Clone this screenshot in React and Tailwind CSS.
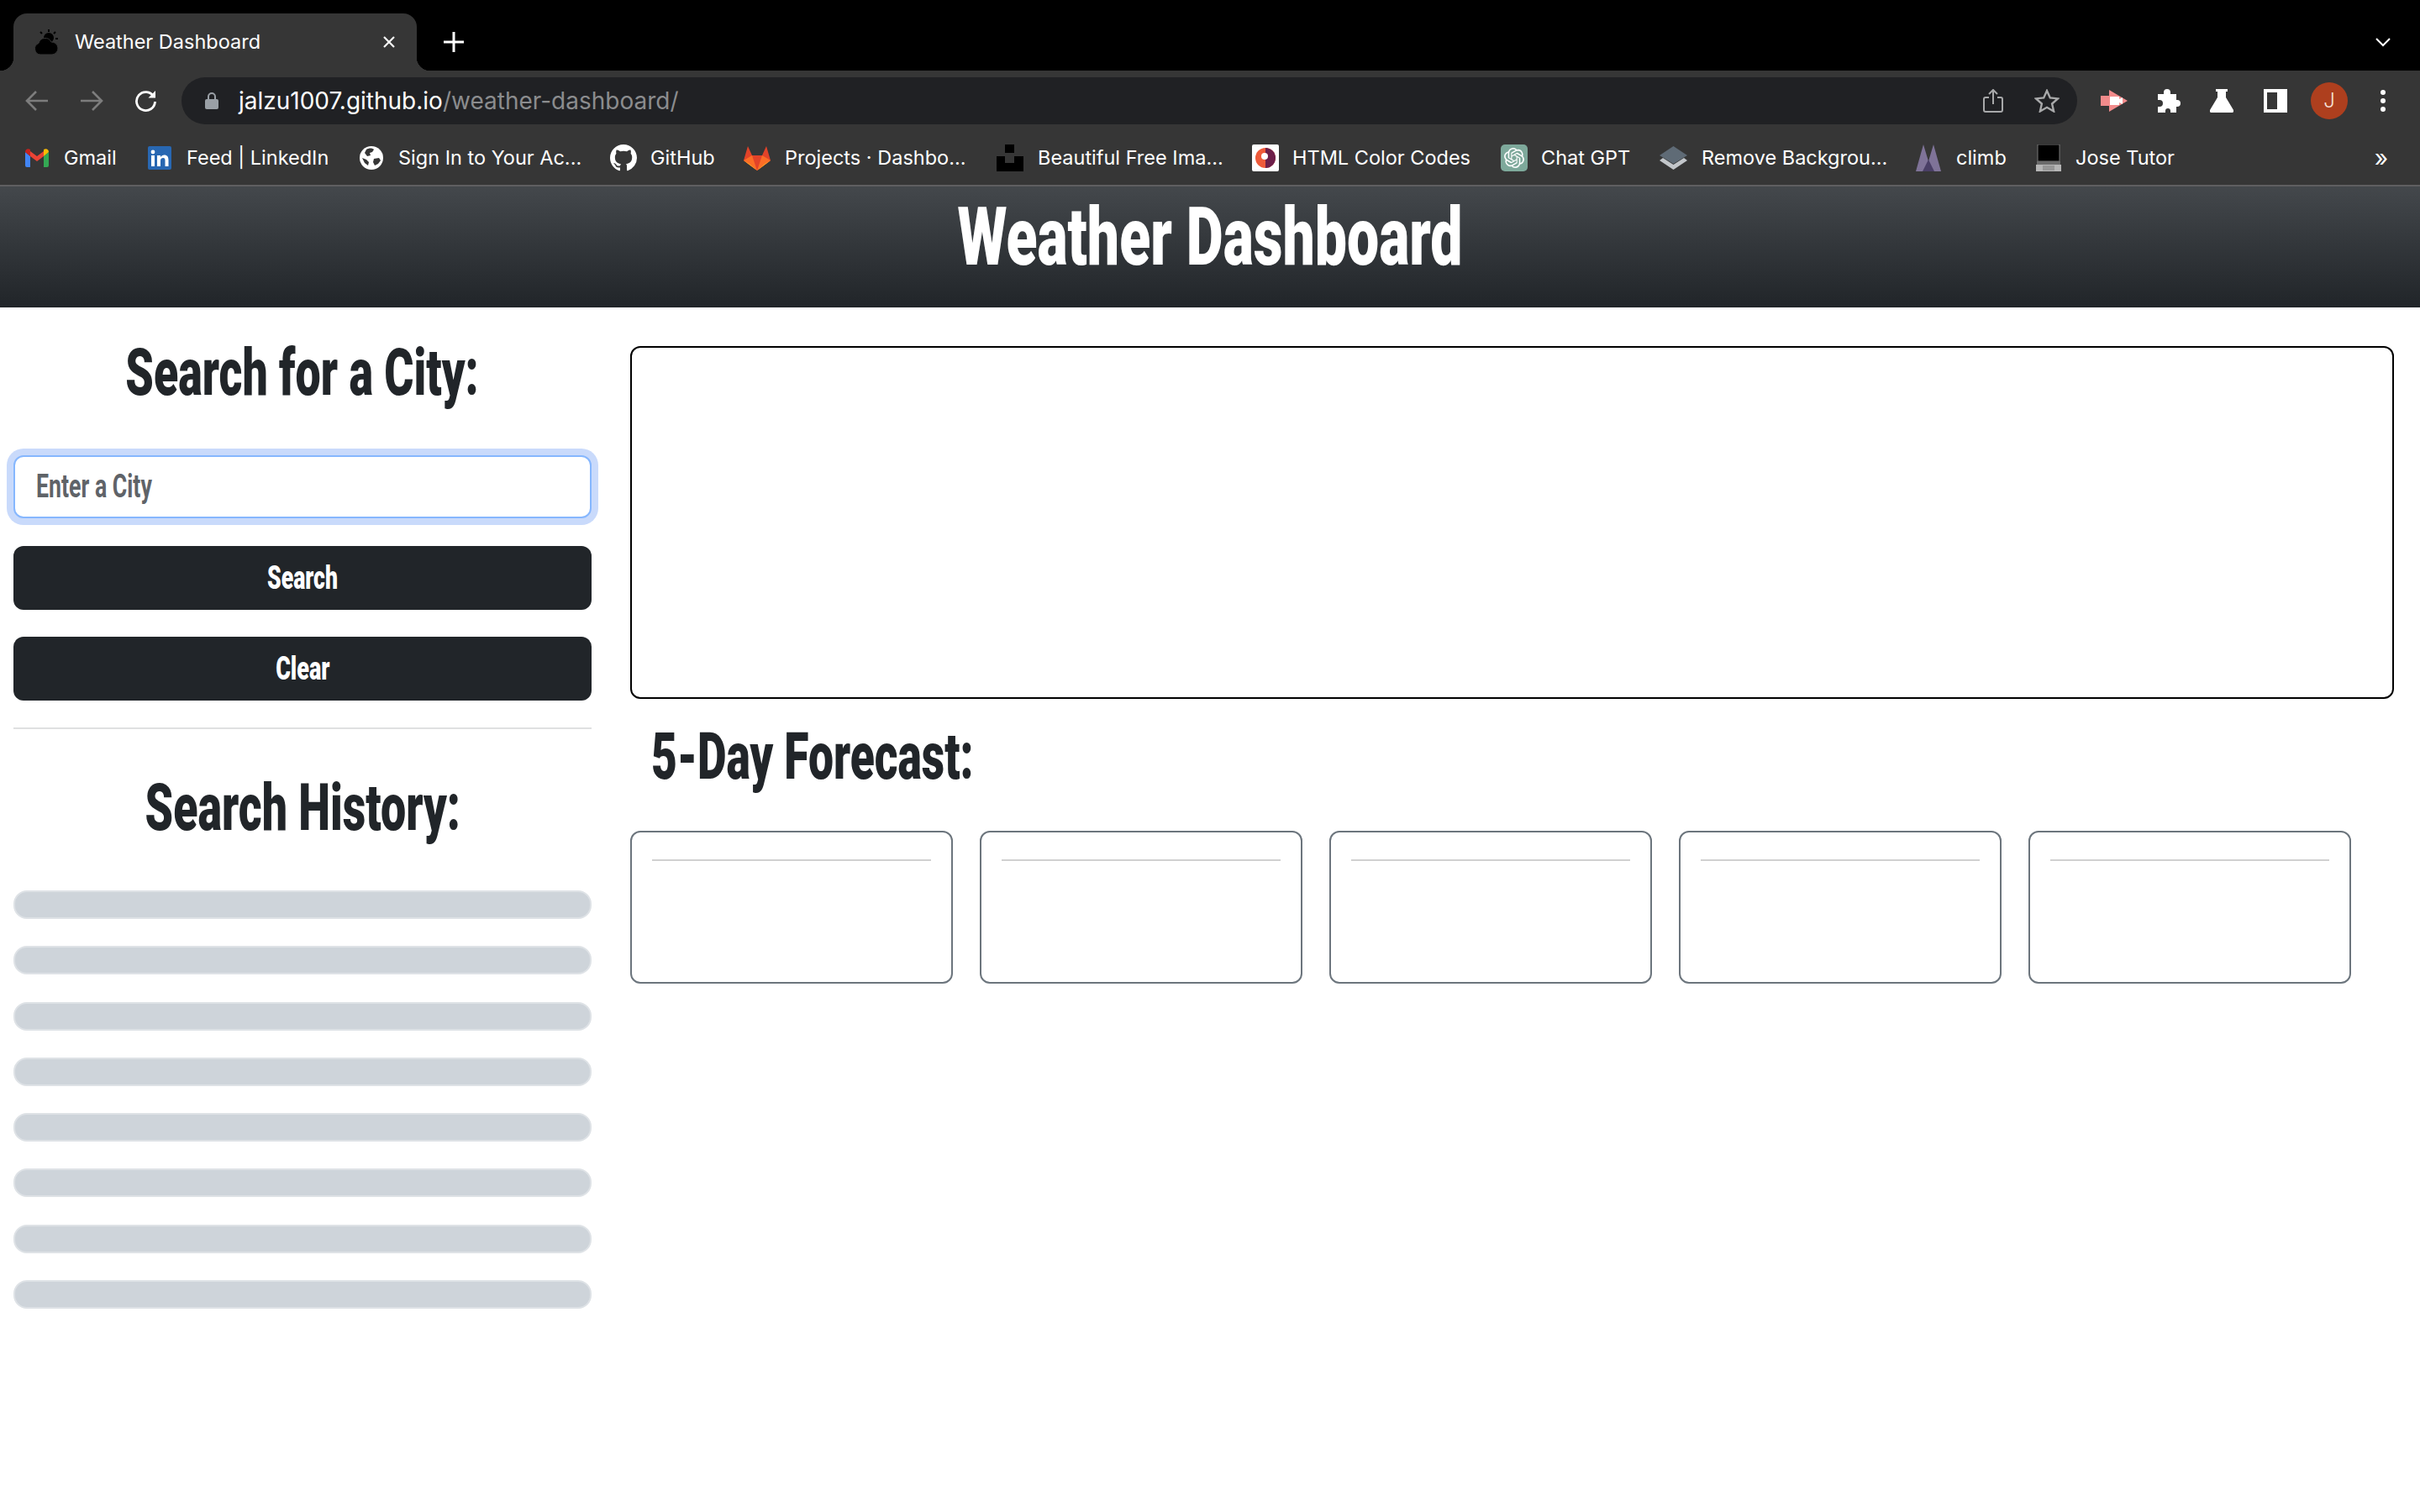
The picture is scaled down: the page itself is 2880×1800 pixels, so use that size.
import React from 'react';
import { SiOpenai } from 'react-icons/si';

const chromeFont = "font-['Inter','Liberation_Sans',sans-serif]";
const headFont = "font-['Roboto','Liberation_Sans',sans-serif]";

const Gmail = () => (
  <svg width="28" height="22" viewBox="0 0 28 22">
    <path d="M0 4v16a2 2 0 0 0 2 2h4V9z" fill="#4285f4" />
    <path d="M28 4v16a2 2 0 0 1-2 2h-4V9z" fill="#34a853" />
    <path d="M6 9V3l8 6 8-6v6l-8 6z" fill="#ea4335" />
    <path d="M0 4c0-3 3-5 6-3v8z" fill="#c5221f" />
    <path d="M28 4c0-3-3-5-6-3v8z" fill="#fbbc04" />
  </svg>
);

const Linkedin = () => (
  <svg width="28" height="28" viewBox="0 0 28 28">
    <rect width="28" height="28" rx="2" fill="#2867b2" />
    <rect x="4" y="11" width="4" height="13" fill="#fff" />
    <circle cx="6" cy="7" r="2.4" fill="#fff" />
    <path d="M11 11h4v2c1-1.500 2.500-2.400 4.500-2.400 3.500 0 5 2.200 5 6V24h-4v-7c0-2-.7-3-2.300-3-1.700 0-3.200 1-3.200 3.200V24h-4z" fill="#fff" />
  </svg>
);

const Globe = () => (
  <svg width="28" height="28" viewBox="0 0 28 28">
    <circle cx="14" cy="14" r="14" fill="#fff" />
    <path d="M8 4c3-2 7-2 9 0l-2 3-3 1 1 3-4 1-3-4zM17 15l6-1 2 3-3 4-4 2-2-4zM3 14l5 2 3 3-1 4-4-3z" fill="#363636" />
  </svg>
);

const Github = () => (
  <svg width="32" height="32" viewBox="0 0 16 16" fill="#fff">
    <path d="M8 0C3.580 0 0 3.580 0 8c0 3.540 2.290 6.530 5.470 7.590.4.070.55-.17.55-.38 0-.19-.01-.82-.01-1.490-2.010.37-2.530-.49-2.690-.94-.09-.23-.48-.94-.82-1.130-.28-.15-.68-.52-.01-.53.63-.01 1.080.58 1.230.82.720 1.210 1.870.87 2.330.66.070-.52.280-.87.510-1.070-1.780-.2-3.640-.89-3.640-3.950 0-.87.310-1.590.820-2.150-.08-.2-.36-1.020.08-2.120 0 0 .67-.21 2.200.820.640-.18 1.320-.27 2-.27s1.360.09 2 .27c1.530-1.040 2.200-.82 2.200-.82.440 1.100.16 1.920.08 2.120.510.560.820 1.270.820 2.150 0 3.070-1.870 3.750-3.650 3.950.290.250.540.730.540 1.480 0 1.070-.01 1.930-.01 2.200 0 .21.150.46.550.38A8.010 8.010 0 0 0 16 8c0-4.420-3.580-8-8-8z" />
  </svg>
);

const Gitlab = () => (
  <svg width="32" height="30" viewBox="0 0 32 30">
    <path d="M16 30 0 18 5 1l5 11h12l5-11 5 17z" fill="#e24329" />
    <path d="M16 30 0 18l10-6z" fill="#fc6d26" />
    <path d="M16 30l16-12-10-6z" fill="#fc6d26" />
    <path d="M16 30 7 22l-7-4 4 3z" fill="#fca326" />
    <path d="M16 30l9-8 7-4-4 3z" fill="#fca326" />
  </svg>
);

const Unsplash = () => (
  <svg width="32" height="32" viewBox="0 0 32 32" fill="#000">
    <rect x="10" y="0" width="11" height="10" />
    <path d="M0 14h10v8h11v-8h11v18H0z" />
  </svg>
);

const ColorCodes = () => (
  <svg width="32" height="32" viewBox="0 0 32 32">
    <rect width="32" height="32" rx="2" fill="#fff" />
    <circle cx="16" cy="16" r="12" fill="#ee5a3a" />
    <path d="M16 4a12 12 0 0 1 0 24z" fill="#6d1f4a" />
    <circle cx="15" cy="14" r="4" fill="#fff" />
  </svg>
);

const ChatGpt = () => (
  <div className="w-[32px] h-[32px] rounded-[5px] bg-[#7ea99b] flex items-center justify-center">
    <SiOpenai size={24} color="#fff" />
  </div>
);

const Layers = () => (
  <svg width="33" height="28" viewBox="0 0 33 28">
    <path d="M0 17l16.500 11L33 17l-4-3-12.500 8L4 14z" fill="#c2c6ca" />
    <path d="M16.500 0 33 11 16.500 21 0 11z" fill="#5f6b76" />
  </svg>
);

const Climb = () => (
  <svg width="30" height="32" viewBox="0 0 30 32">
    <path d="M0 32 9 0l6 20 6-20 9 32z" fill="#7f7398" />
    <path d="M8 32l7-14 7 14z" fill="#4a3f66" />
  </svg>
);

const Laptop = () => (
  <svg width="30" height="32" viewBox="0 0 30 32">
    <rect x="2" y="0" width="26" height="20" fill="#000" stroke="#777" />
    <rect x="1" y="20" width="28" height="4" fill="#6b6b6b" />
    <path d="M0 24h30v8H0z" fill="#b5b5b5" />
    <rect x="8" y="25" width="14" height="6" fill="#969696" />
  </svg>
);

// widths come from the spacing between bookmarks in the bar
const bookmarks = [
  { label: 'Gmail', Icon: Gmail, item: 'w-[146px]', box: 'w-[32px]' },
  { label: 'Feed | LinkedIn', Icon: Linkedin, item: 'w-[252px]', box: 'w-[32px]' },
  { label: 'Sign In to Your Ac...', Icon: Globe, item: 'w-[298px]', box: 'w-[32px]' },
  { label: 'GitHub', Icon: Github, item: 'w-[159px]', box: 'w-[34px]' },
  { label: 'Projects · Dashbo...', Icon: Gitlab, item: 'w-[301px]', box: 'w-[35px]' },
  { label: 'Beautiful Free Ima...', Icon: Unsplash, item: 'w-[304px]', box: 'w-[35px]' },
  { label: 'HTML Color Codes', Icon: ColorCodes, item: 'w-[296px]', box: 'w-[34px]' },
  { label: 'Chat GPT', Icon: ChatGpt, item: 'w-[189px]', box: 'w-[34px]' },
  { label: 'Remove Backgrou...', Icon: Layers, item: 'w-[305px]', box: 'w-[36px]' },
  { label: 'climb', Icon: Climb, item: 'w-[143px]', box: 'w-[34px]' },
  { label: 'Jose Tutor', Icon: Laptop, item: 'w-[160px]', box: 'w-[33px]' },
];

const BrowserChrome = () => (
  <div className={`${chromeFont} text-white`}>
    {/* tab strip */}
    <div className="h-[84px] bg-black flex items-end pl-[16px] pr-[35px]">
      <div className="relative w-[480px] h-[68px] bg-[#363636] rounded-t-[16px] flex items-center pl-[24px] pr-[24px]">
        <span className="absolute left-[-16px] bottom-0 w-[16px] h-[16px] bg-[radial-gradient(circle_at_0_0,#000_16px,#363636_16.500px)]" />
        <span className="absolute right-[-16px] bottom-0 w-[16px] h-[16px] bg-[radial-gradient(circle_at_100%_0,#000_16px,#363636_16.500px)]" />
        <svg width="30" height="30" viewBox="0 0 30 30" fill="#000" className="shrink-0">
          <circle cx="18" cy="10" r="6" />
          <path d="M18 0v3M26 3l-2 2M29 11h-3M8 3l2 2" stroke="#000" strokeWidth="2" />
          <path d="M8 30a7 7 0 0 1-2-13.500A8 8 0 0 1 21 15a6 6 0 0 1 1 15z" stroke="#363636" strokeWidth="1" />
        </svg>
        <span className="ml-[19px] text-[23.5px] leading-none flex-1 whitespace-nowrap">Weather Dashboard</span>
        <svg width="18" height="18" viewBox="0 0 18 18" stroke="#fff" strokeWidth="2.200" className="shrink-0">
          <path d="M3 3l12 12M15 3 3 15" />
        </svg>
      </div>
      <svg width="24" height="24" viewBox="0 0 24 24" stroke="#fff" strokeWidth="3" className="ml-[32px] mb-[22px]">
        <path d="M12 0v24M0 12h24" />
      </svg>
      <svg width="18" height="11" viewBox="0 0 18 11" fill="none" stroke="#fff" strokeWidth="2" className="ml-auto mb-[28px]">
        <path d="M1 1l8 8 8-8" />
      </svg>
    </div>

    {/* toolbar */}
    <div className="h-[72px] bg-[#363636] flex items-center pl-[30px]">
      <svg width="28" height="26" viewBox="0 0 28 26" fill="none" stroke="#7d7d7d" strokeWidth="2.600">
        <path d="M27 13H3M13 2 2 13l11 11" />
      </svg>
      <svg width="28" height="26" viewBox="0 0 28 26" fill="none" stroke="#7d7d7d" strokeWidth="2.600" className="ml-[37px]">
        <path d="M1 13h24M15 2l11 11-11 11" />
      </svg>
      <svg width="28" height="28" viewBox="0 0 28 28" fill="none" stroke="#fff" strokeWidth="2.800" className="ml-[36px]">
        <path d="M24 9a11 11 0 1 0 1.500 6" />
        <path d="M26 2v8.500h-8.500z" fill="#fff" stroke="none" />
      </svg>
      <div className="ml-[29px] w-[2256px] h-[56px] rounded-full bg-[#202124] flex items-center pl-[28px]">
        <svg width="16" height="20" viewBox="0 0 16 20" fill="none">
          <rect y="8" width="16" height="12" rx="2" fill="#9aa0a6" />
          <path d="M4 8V5a4 4 0 0 1 8 0v3" stroke="#9aa0a6" strokeWidth="2" />
        </svg>
        <span className="ml-[24px] text-[28px] leading-none whitespace-nowrap">
          jalzu1007.github.io<span className="text-[#8b8c8e]">/weather-dashboard/</span>
        </span>
        <svg width="24" height="28" viewBox="0 0 24 28" fill="none" stroke="#a8a9aa" strokeWidth="2" className="ml-auto">
          <path d="M7 10H3a2 2 0 0 0-2 2v13a2 2 0 0 0 2 2h18a2 2 0 0 0 2-2V12a2 2 0 0 0-2-2h-4M12 18V2M7 6l5-5 5 5" />
        </svg>
        <svg width="30" height="28" viewBox="0 0 30 28" fill="none" stroke="#a8a9aa" strokeWidth="2.400" className="ml-[37px] mr-[21px]">
          <path d="M15 2l3.800 8.400 9.200 1-6.900 6.100 2 9L15 21.800 6.900 26.500l2-9L2 11.400l9.200-1z" />
        </svg>
      </div>
      <svg width="32" height="26" viewBox="0 0 32 26" className="ml-[28px]">
        <path d="M10 0l22 13-22 13z" fill="#f28b8b" />
        <rect y="7" width="16" height="12" fill="#f28b8b" />
        <rect x="11" y="8" width="11" height="10" fill="#fff" />
        <path d="M22 11l4-2v8l-4-2z" fill="#fff" />
      </svg>
      <svg width="29" height="28" viewBox="0 0 29 28" fill="#fff" className="ml-[34px]">
        <path d="M2 6h7V4a4 4 0 0 1 8 0v2h7v7h1a4 4 0 0 1 0 8h-1v7h-7v-2a3 3 0 0 0-6 0v2H2v-7h2a4 4 0 0 0 0-8H2z" />
      </svg>
      <svg width="28" height="28" viewBox="0 0 28 28" fill="#fff" className="ml-[35px]">
        <path d="M7 0h14v3h-2v7l9 15a2 2 0 0 1-2 3H2a2 2 0 0 1-2-3l9-15V3H7z" />
      </svg>
      <div className="ml-[36px] w-[28px] h-[28px] border-[4px] border-white border-r-[12px]" />
      <div className="ml-[28px] w-[44px] h-[44px] rounded-full bg-[#ae3f1e] flex items-center justify-center text-[24px] font-light text-[#f5e0d8]">J</div>
      <div className="ml-[39px] flex flex-col gap-[4px]">
        <span className="w-[6px] h-[6px] rounded-full bg-white" />
        <span className="w-[6px] h-[6px] rounded-full bg-white" />
        <span className="w-[6px] h-[6px] rounded-full bg-white" />
      </div>
    </div>

    {/* bookmarks */}
    <div className="h-[64px] bg-[#363636] flex items-center pl-[30px]">
      {bookmarks.map(({ label, Icon, item, box }) => (
        <div key={label} className={`${item} flex items-center gap-[14px]`}>
          <div className={`${box} shrink-0 flex justify-start`}><Icon /></div>
          <span className="text-[23.5px] leading-none whitespace-nowrap">{label}</span>
        </div>
      ))}
      <span className="ml-auto mr-[38px] text-[28px] leading-none">»</span>
    </div>
    <div className="h-[2px] bg-[#5f5f61]" />
  </div>
);

const Condensed = ({ children, scale, origin = 'origin-center' }) => (
  <span className={`inline-block whitespace-nowrap ${origin} ${scale}`}>{children}</span>
);

const historySlots = [1, 2, 3, 4, 5, 6, 7, 8];
const forecastSlots = [1, 2, 3, 4, 5];

const Sidebar = () => (
  <aside className="w-[688px] ml-[16px] shrink-0">
    <h2 className="mt-[36px] h-[92px] text-center text-[77px] leading-[84px] font-black text-[#212529]">
      <Condensed scale="scale-x-[0.697]">Search for a City:</Condensed>
    </h2>
    <div className="relative mt-[48px]">
      <input
        readOnly
        aria-label="Enter a City"
        className="block w-full h-[75px] rounded-[12px] border-2 border-[#86b7fe] bg-white shadow-[0_0_0_8px_#c9dafb] outline-none"
      />
      <span className="absolute left-[27px] top-[15px] text-[38px] leading-[44px] font-bold text-[#5f6368] pointer-events-none">
        <Condensed scale="scale-x-[0.703]" origin="origin-left">Enter a City</Condensed>
      </span>
    </div>
    <button className="block mt-[33px] w-full h-[76px] rounded-[12px] bg-[#212529] text-white text-[38px] leading-[72px] font-black">
      <Condensed scale="scale-x-[0.7]">Search</Condensed>
    </button>
    <button className="block mt-[32px] w-full h-[76px] rounded-[12px] bg-[#212529] text-white text-[38px] leading-[72px] font-black">
      <Condensed scale="scale-x-[0.71]">Clear</Condensed>
    </button>
    <div className="mt-[32px] h-[2px] bg-[#dfe0e1]" />
    <h2 className="mt-[50px] h-[92px] text-center text-[77px] leading-[88px] font-black text-[#212529]">
      <Condensed scale="scale-x-[0.697]">Search History:</Condensed>
    </h2>
    <div className="mt-[50px] flex flex-col gap-[32.3px]">
      {historySlots.map((n) => (
        <div key={n} className="h-[34px] rounded-[16px] bg-[#ced4da] border-2 border-[#dee2e6]" />
      ))}
    </div>
  </aside>
);

const Forecast = () => (
  <main className="ml-[46px] flex-1 pr-[31px] pt-[46px]">
    <div className="h-[420px] rounded-[12px] border-2 border-black" />
    <h2 className="mt-[25px] ml-[25px] h-[92px] text-[77px] leading-[88px] font-black text-[#212529]">
      <Condensed scale="scale-x-[0.693]" origin="origin-left">5-Day Forecast:</Condensed>
    </h2>
    <div className="mt-[40px] flex gap-[32px]">
      {forecastSlots.map((n) => (
        <div key={n} className="w-[384px] h-[182px] rounded-[12px] border-2 border-[#6c757d] px-[24px] pt-[32px]">
          <div className="h-[2px] bg-[#d0d0d0]" />
        </div>
      ))}
    </div>
  </main>
);

export default function App() {
  return (
    <div className={`${headFont} w-[2880px] h-[1800px] bg-white overflow-hidden`}>
      <BrowserChrome />
      <header className="h-[144px] bg-gradient-to-b from-[#44484c] to-[#212529] text-center text-white text-[96px] leading-[120px] font-black">
        <Condensed scale="scale-x-[0.707]">Weather Dashboard</Condensed>
      </header>
      <div className="flex">
        <Sidebar />
        <Forecast />
      </div>
    </div>
  );
}
